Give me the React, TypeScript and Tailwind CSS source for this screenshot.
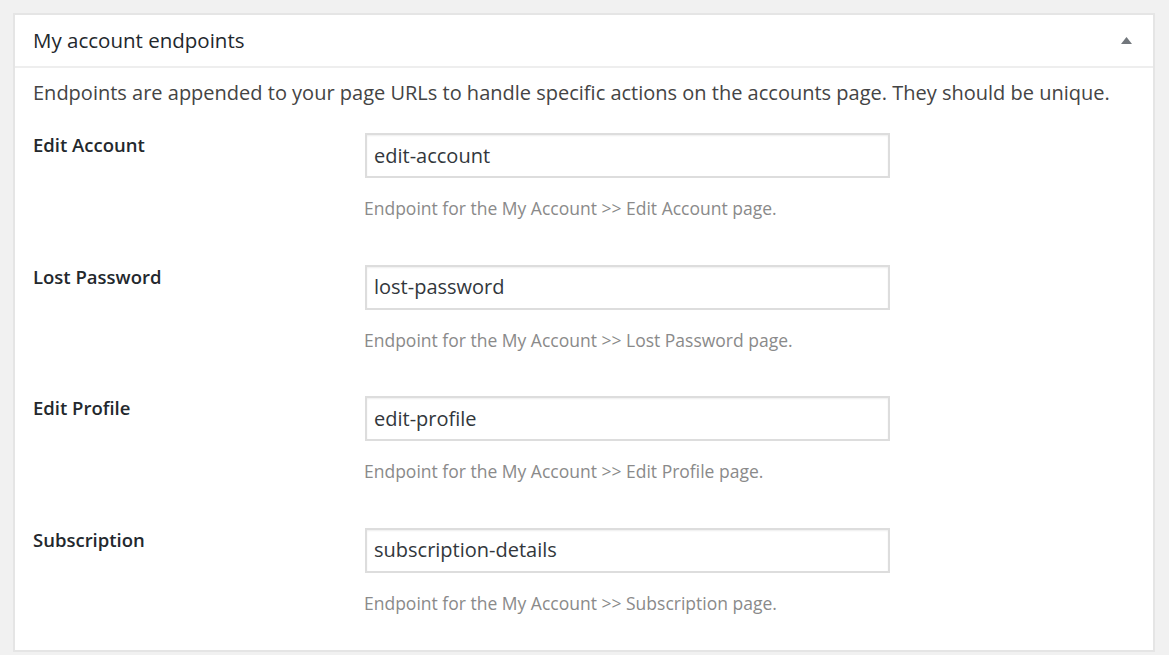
const rows = [
  { label: 'Edit Account', value: 'edit-account', page: 'Edit Account' },
  { label: 'Lost Password', value: 'lost-password', page: 'Lost Password' },
  { label: 'Edit Profile', value: 'edit-profile', page: 'Edit Profile' },
  { label: 'Subscription', value: 'subscription-details', page: 'Subscription' },
]

const font = { fontFamily: '"Open Sans", "Noto Sans", Arial, sans-serif' }

export default function App() {
  return (
    <div className="min-h-[655px] bg-[#f1f1f1] px-[13px] pt-[13px] pb-[3px]" style={font}>
      <div className="w-[1142px] border-2 border-[#e5e5e5] bg-white">
        <div className="flex h-[53px] items-center justify-between border-b-2 border-[#eeeeee] pl-[18px] pr-[21px]">
          <h2 className="text-[20.5px] font-medium text-[#23282d]">My account endpoints</h2>
          <svg width="11" height="7" viewBox="0 0 11 7" className="mb-[1px]">
            <path d="M0 7 L5.5 0 L11 7 Z" fill="#72777c" />
          </svg>
        </div>
        <div className="pl-[18px] pt-[11px] pb-[35px]">
          <p className="text-[20px] leading-[28px] text-[#444444]">
            Endpoints are appended to your page URLs to handle specific actions on the
            accounts page. They should be unique.
          </p>
          <div className="mt-[26px] flex flex-col gap-[44.5px]">
            {rows.map((r) => (
              <div key={r.label} className="flex">
                <div className="w-[332px] text-[18.5px] leading-[24px] font-semibold text-[#23282d]">
                  {r.label}
                </div>
                <div className="flex flex-col">
                  <div className="flex h-[45px] w-[525px] items-center border-2 border-[#dddddd] pl-[7px] text-[20px] text-[#32373c] shadow-[inset_0_1px_2px_rgba(0,0,0,0.07)]">
                    {r.value}
                  </div>
                  <div className="-ml-[1px] mt-[18px] text-[17.5px] leading-[24px] text-[#8a8a8a]">
                    Endpoint for the My Account &gt;&gt; {r.page} page.
                  </div>
                </div>
              </div>
            ))}
          </div>
        </div>
      </div>
    </div>
  )
}
